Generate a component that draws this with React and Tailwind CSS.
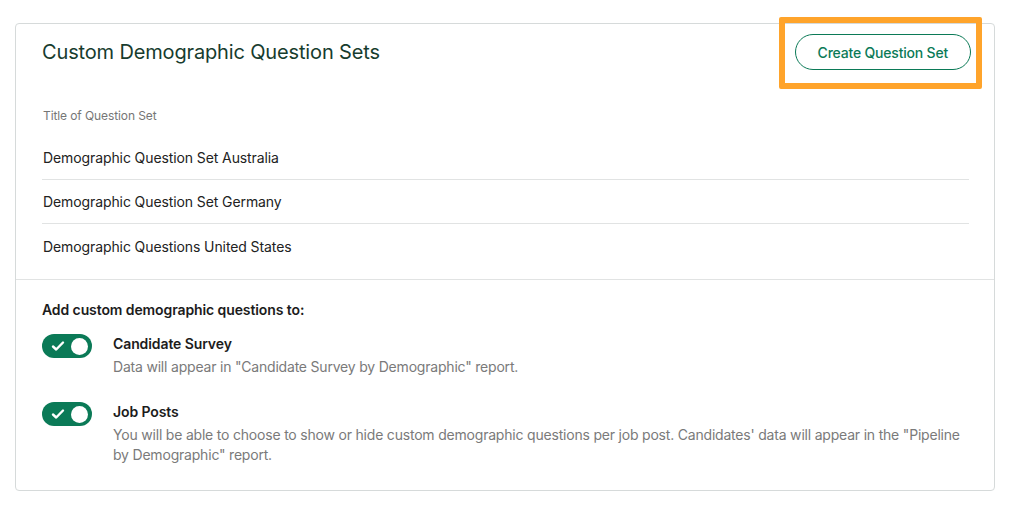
import React, { useState } from 'react'

const questionSets = [
  'Demographic Question Set Australia',
  'Demographic Question Set Germany',
  'Demographic Questions United States',
]

function Toggle({ on, onChange }) {
  return (
    <button
      type="button"
      onClick={() => onChange(!on)}
      className={`shrink-0 w-[50px] h-[24px] rounded-full flex items-center justify-between pl-[9px] pr-[4px] ${on ? 'bg-[#0b7a57]' : 'bg-[#c8cccc]'}`}
    >
      <svg width="14" height="12" viewBox="0 0 14 12" fill="none">
        <path d="M2 6.5 L5.2 9.5 L12 2.5" stroke="white" strokeWidth="2.4" strokeLinecap="round" strokeLinejoin="round" />
      </svg>
      <span className="w-[17px] h-[17px] rounded-full bg-white" />
    </button>
  )
}

export default function App() {
  const [survey, setSurvey] = useState(true)
  const [jobPosts, setJobPosts] = useState(true)

  return (
    <div className="w-[1012px] h-[512px] bg-white pt-[23px] pl-[15px] font-['Inter',sans-serif]">
      <div className="w-[980px] h-[468px] border border-[#d6dada] rounded-[4px] bg-white">
        {/* Header + question sets */}
        <div className="pl-[26px] pr-[23px]">
          <div className="flex items-center justify-between pt-[10px]">
            <h2 className="text-[20px] leading-[28px] text-[#173c2e] tracking-[-0.15px]">Custom Demographic Question Sets</h2>
            <div className="relative">
              <button className="h-[36px] px-[22px] rounded-full border border-[#0b7a57] text-[#0b7a57] text-[14px] font-medium tracking-[-0.2px]">
                Create Question Set
              </button>
              {/* highlight annotation */}
              <div className="absolute -left-[16px] -top-[17px] -right-[11px] -bottom-[19px] border-[6px] border-[#ffa42b] rounded-[2px] pointer-events-none" />
            </div>
          </div>

          <div className="mt-[38px] pr-[2px]">
            <div className="text-[12px] leading-[16px] text-[#767676] pl-[1px] tracking-[-0.1px]">Title of Question Set</div>
            <div className="mt-[12px]">
              {questionSets.map((name, i) => (
                <div
                  key={name}
                  className={`h-[44px] flex items-center pl-[1px] text-[14px] text-[#222222] tracking-[-0.1px] ${i < questionSets.length - 1 ? 'border-b border-[#e1e3e3]' : ''}`}
                >
                  {name}
                </div>
              ))}
            </div>
          </div>
        </div>

        <div className="mt-[11px] border-t border-[#e1e3e3]" />

        {/* Toggles */}
        <div className="pl-[26px] pr-[25px] pt-[20px]">
          <div className="text-[14px] leading-[20px] font-semibold text-[#1c1c1c] tracking-[-0.1px]">Add custom demographic questions to:</div>

          <div className="mt-[14px] flex gap-[21px]">
            <Toggle on={survey} onChange={setSurvey} />
            <div>
              <div className="text-[14px] leading-[20px] font-semibold text-[#1c1c1c] tracking-[-0.1px]">Candidate Survey</div>
              <div className="mt-[3px] text-[14px] leading-[20px] text-[#7a7a7a] tracking-[-0.2px]">Data will appear in "Candidate Survey by Demographic" report.</div>
            </div>
          </div>

          <div className="mt-[25px] flex gap-[21px]">
            <Toggle on={jobPosts} onChange={setJobPosts} />
            <div>
              <div className="text-[14px] leading-[20px] font-semibold text-[#1c1c1c] tracking-[-0.1px]">Job Posts</div>
              <div className="mt-[3px] text-[14px] leading-[20px] text-[#7a7a7a] tracking-[-0.2px]">
                You will be able to choose to show or hide custom demographic questions per job post. Candidates' data will appear in the "Pipeline by Demographic" report.
              </div>
            </div>
          </div>
        </div>
      </div>
    </div>
  )
}
